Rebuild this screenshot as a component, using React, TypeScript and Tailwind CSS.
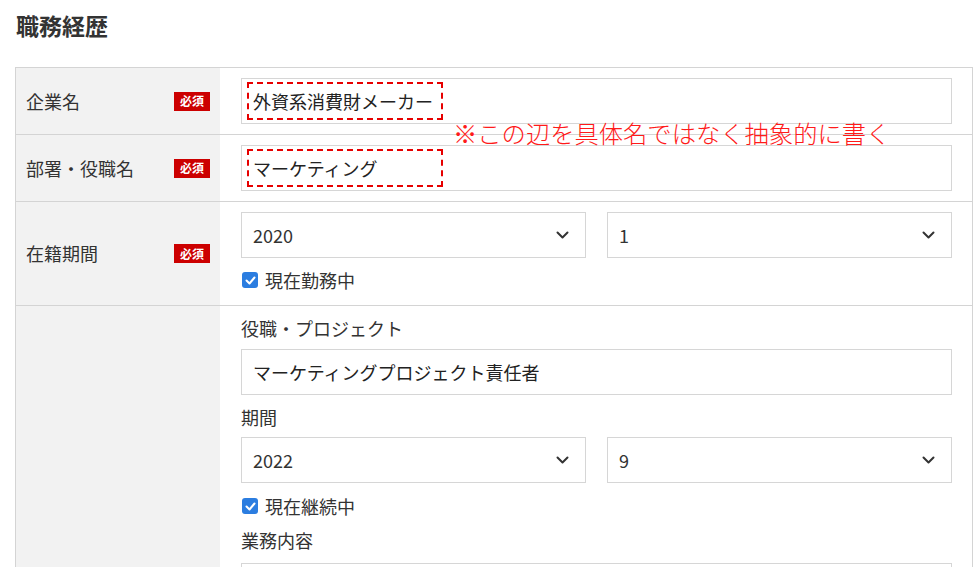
import React from 'react';

function Badge() {
  return (
    <span className="flex h-[19px] w-[36px] items-center justify-center bg-[#cc0000] text-[12px] font-bold leading-none text-white">
      必須
    </span>
  );
}

function Chevron() {
  return (
    <svg width="13" height="8" viewBox="0 0 13 8" className="shrink-0">
      <path d="M1.5 1.5l5 5 5-5" fill="none" stroke="#333" strokeWidth="2" strokeLinecap="round" strokeLinejoin="round" />
    </svg>
  );
}

function Select({ value }: { value: string }) {
  return (
    <div className="flex h-[46px] items-center justify-between border border-[#d6d6d6] pl-[11px] pr-[16px] text-[18px] text-[#333]">
      <span>{value}</span>
      <Chevron />
    </div>
  );
}

function Field({ value, marked }: { value: string; marked?: boolean }) {
  if (marked) {
    return (
      <div className="flex h-[46px] items-center border border-[#d6d6d6] pl-[5px] text-[18px] text-[#222]">
        <span className="flex h-[38px] w-[196px] items-center border-2 border-dashed border-[#e60000] pl-[4px]">{value}</span>
      </div>
    );
  }
  return (
    <div className="flex h-[46px] items-center border border-[#d6d6d6] px-[11px] text-[18px] text-[#222]">
      {value}
    </div>
  );
}

function Check({ label }: { label: string }) {
  return (
    <div className="flex h-[24px] items-center gap-[7px] pl-[1px] text-[18px] text-[#333]">
      <span className="flex h-[16px] w-[16px] items-center justify-center rounded-[3px] bg-[#2b7de0]">
        <svg width="11" height="9" viewBox="0 0 11 9">
          <path d="M1.5 4.5l3 3 5-6" fill="none" stroke="#fff" strokeWidth="2" strokeLinecap="round" strokeLinejoin="round" />
        </svg>
      </span>
      <span>{label}</span>
    </div>
  );
}

function Row({ label, required, children }: { label?: string; required?: boolean; children: React.ReactNode }) {
  return (
    <div className="flex border-t border-[#d4d4d4] first:border-t-0">
      <div className="flex w-[204px] shrink-0 items-center justify-between bg-[#f2f2f2] px-[10px] text-[18px] text-[#333]">
        <span>{label}</span>
        {required && <Badge />}
      </div>
      <div className="flex-1 py-[10px] pl-[21px] pr-[20px]">{children}</div>
    </div>
  );
}

export default function App() {
  return (
    <div className="relative min-h-screen bg-white pl-[15px] pt-[10px] font-['Noto_Sans_CJK_JP',sans-serif] text-[#333]">
      <h2 className="pl-[1px] text-[23px] font-bold leading-[30px] text-[#333]">職務経歴</h2>

      <div className="mt-[27px] w-[958px] border border-[#d4d4d4]">
        <Row label="企業名" required>
          <Field value="外資系消費財メーカー" marked />
        </Row>
        <Row label="部署・役職名" required>
          <Field value="マーケティング" marked />
        </Row>
        <Row label="在籍期間" required>
          <div className="grid grid-cols-2 gap-[21px]">
            <Select value="2020" />
            <Select value="1" />
          </div>
          <div className="mt-[10px] pb-[3px]">
            <Check label="現在勤務中" />
          </div>
        </Row>
        <Row>
          <div>
            <div className="text-[18px] leading-[24px] text-[#333]">役職・プロジェクト</div>
            <div className="mt-[9px]">
              <Field value="マーケティングプロジェクト責任者" />
            </div>
            <div className="mt-[10px] text-[18px] leading-[24px] text-[#333]">期間</div>
            <div className="mt-[8px] grid grid-cols-2 gap-[21px]">
              <Select value="2022" />
              <Select value="9" />
            </div>
            <div className="mt-[11px]">
              <Check label="現在継続中" />
            </div>
            <div className="mt-[10px] text-[18px] leading-[24px] text-[#333]">業務内容</div>
            <div className="mt-[11px] h-[120px] border border-[#d6d6d6]" />
          </div>
        </Row>
      </div>

      <p className="absolute left-[453px] top-[117px] whitespace-nowrap text-[24.3px] font-light leading-[32px] text-[#ff1a1a]">
        ※この辺を具体名ではなく抽象的に書く
      </p>
    </div>
  );
}
